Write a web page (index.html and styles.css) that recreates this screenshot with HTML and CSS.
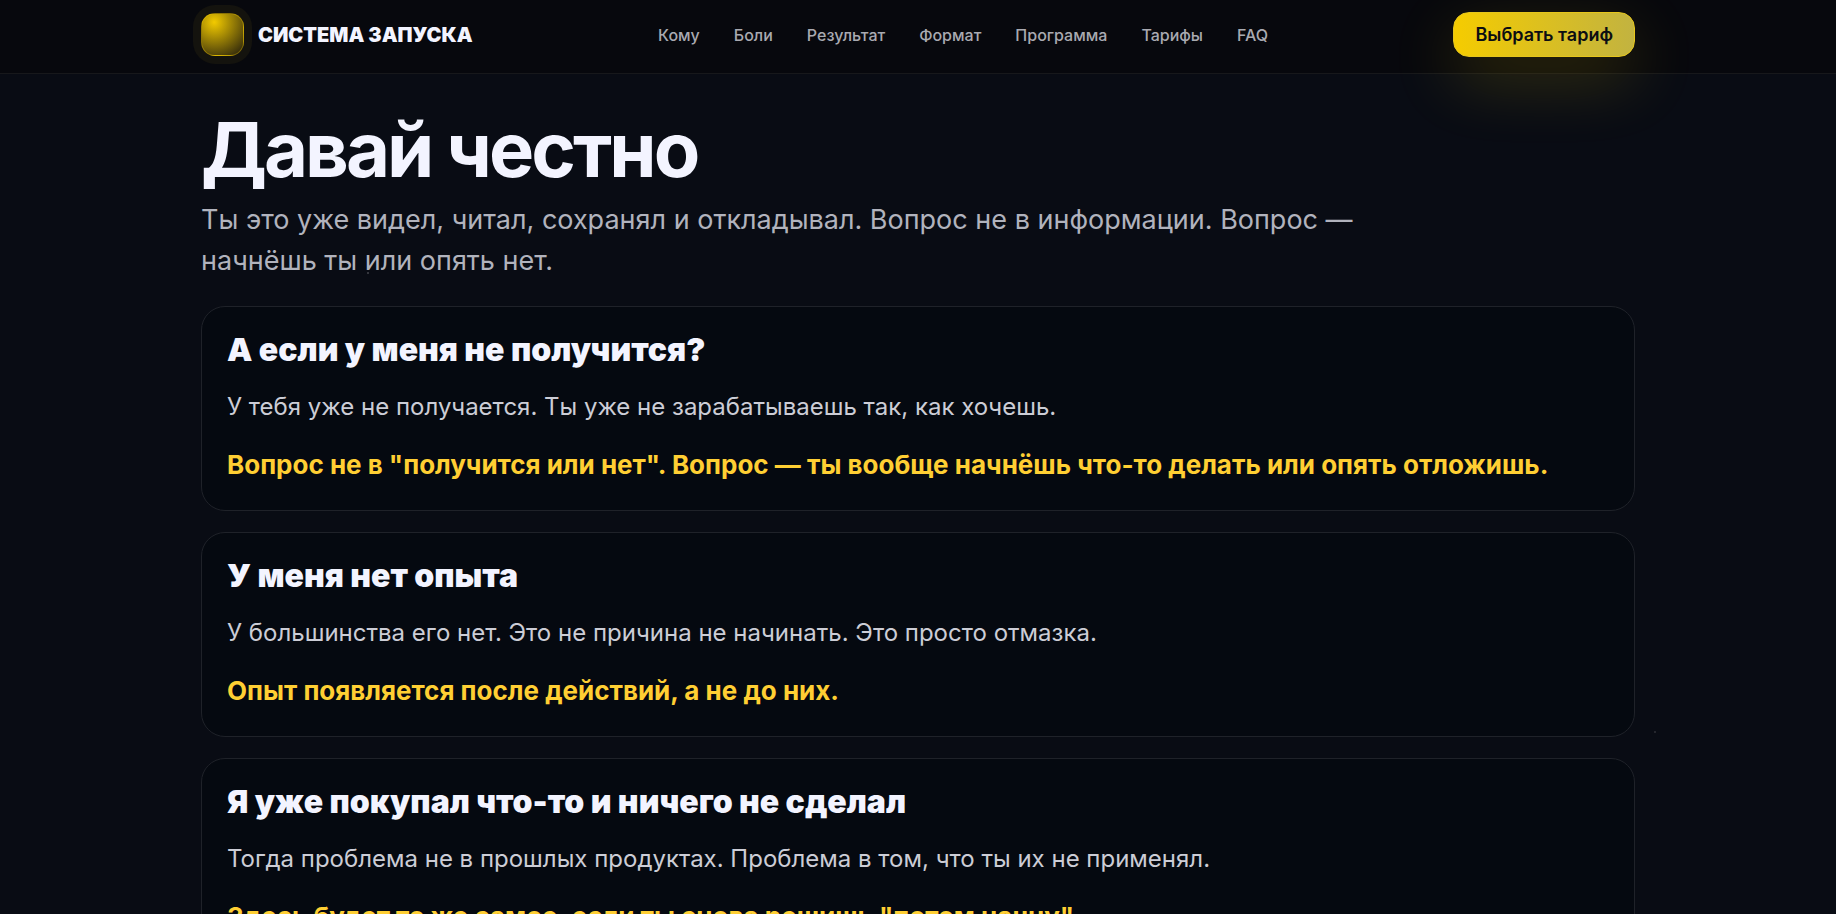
FILE: index.html
```html
<!DOCTYPE html>
<html lang="ru">

<head>
    <meta charset="UTF-8">
    <meta name="viewport" content="width=device-width, initial-scale=1.0">
    <title>Система запуска</title>
    <link rel="stylesheet" href="styles.css">
</head>

<body>
    <header class="header">
        <div class="container header__inner">
            <a class="brand" href="#top">
                <span class="brand__mark"></span>
                <span>СИСТЕМА ЗАПУСКА</span>
            </a>
            <nav class="nav">
                <a href="#who">Кому</a>
                <a href="#pain">Боли</a>
                <a href="#result">Результат</a>
                <a href="#format">Формат</a>
                <a href="#program">Программа</a>
                <a href="#tariffs">Тарифы</a>
                <a href="#faq">FAQ</a>
            </nav>
            <button class="btn" type="button">Выбрать тариф</button>
        </div>
    </header>

    <main class="container section" id="faq">
        <h1 class="title">Давай честно</h1>
        <p class="lead">Ты это уже видел, читал, сохранял и откладывал. Вопрос не в информации. Вопрос — начнёшь ты или опять нет.</p>

        <div class="cards">
            <article class="card">
                <h2>А если у меня не получится?</h2>
                <p>У тебя уже не получается. Ты уже не зарабатываешь так, как хочешь.</p>
                <strong>Вопрос не в "получится или нет". Вопрос — ты вообще начнёшь что-то делать или опять отложишь.</strong>
            </article>
            <article class="card">
                <h2>У меня нет опыта</h2>
                <p>У большинства его нет. Это не причина не начинать. Это просто отмазка.</p>
                <strong>Опыт появляется после действий, а не до них.</strong>
            </article>
            <article class="card">
                <h2>Я уже покупал что-то и ничего не сделал</h2>
                <p>Тогда проблема не в прошлых продуктах. Проблема в том, что ты их не применял.</p>
                <strong>Здесь будет то же самое, если ты снова решишь "потом начну".</strong>
            </article>
        </div>
    </main>
</body>

</html>
```

FILE: styles.css
```css
* {
    box-sizing: border-box;
}

body {
    margin: 0;
    background-color: #090c14;
    /* Dust specks */
    background-image: linear-gradient(#24262d, #24262d), linear-gradient(#34363d, #34363d);
    background-repeat: no-repeat;
    background-attachment: fixed;
    background-size: 2px 2px;
    background-position: 90.2% 80.2%, 20% 29.8%;
    color: #f3f4ff;
    font-family: Inter, 'Liberation Sans', sans-serif;
}

.container {
    max-width: 1480px;
    margin: 0 auto;
    padding: 0 23px;
}

/* Header */
.header {
    position: sticky;
    top: 0;
    z-index: 10;
    background-color: #07080d;
    border-bottom: 1px solid #17181b;
}

.header__inner {
    display: flex;
    align-items: center;
    justify-content: space-between;
    padding-top: 12px;
    padding-bottom: 16px;
}

.brand {
    display: flex;
    align-items: center;
    gap: 14px;
    color: #f3f4ff;
    font-size: 20px;
    font-weight: 900;
    text-decoration: none;
}

.brand__mark {
    width: 43px;
    height: 43px;
    border: 1px solid rgba(245, 204, 0, 0.35);
    border-radius: 14px;
    background: radial-gradient(circle at 30% 20%, #f2ca00, #2a230c 95%);
    box-shadow: 0 0 0 8px #14130e;
}

.nav {
    display: flex;
    gap: 34px;
}

.nav a {
    color: #a9aab1;
    font-size: 16px;
    font-weight: 500;
    text-decoration: none;
}

.btn {
    height: 45px;
    padding: 0 21px;
    border: 1px solid #e6c61c;
    border-radius: 16px;
    background: linear-gradient(90deg, #f5cc00, #c2b340);
    box-shadow: 0 22px 66px rgba(245, 204, 0, 0.2);
    color: #0b0d12;
    font-family: inherit;
    font-size: 18px;
    font-weight: 600;
    cursor: pointer;
}

/* FAQ */
.section {
    padding-top: 45px;
}

.title {
    margin: 0;
    padding-bottom: 12px;
    background: #f3f4ff;
    -webkit-background-clip: text;
    background-clip: text;
    color: transparent;
    font-size: 76px;
    font-weight: 700;
    line-height: 60px;
    letter-spacing: -3px;
}

.lead {
    max-width: 1180px;
    margin: 8px 0 0;
    color: #b1b3bd;
    font-size: 27px;
    line-height: 41px;
}

.cards {
    display: grid;
    gap: 21px;
    margin-top: 25px;
}

.card {
    padding: 24px 25px;
    border: 1px solid #1f2229;
    border-radius: 24px;
    background-color: #050910;
}

.card h2 {
    margin: 0;
    font-size: 32px;
    font-weight: 900;
    line-height: 38px;
}

.card p {
    margin: 17px 0;
    color: #cccdd6;
    font-size: 24px;
    line-height: 41px;
}

.card strong {
    display: block;
    color: #ffcf33;
    font-size: 26px;
    font-weight: 700;
    line-height: 42px;
}
```
